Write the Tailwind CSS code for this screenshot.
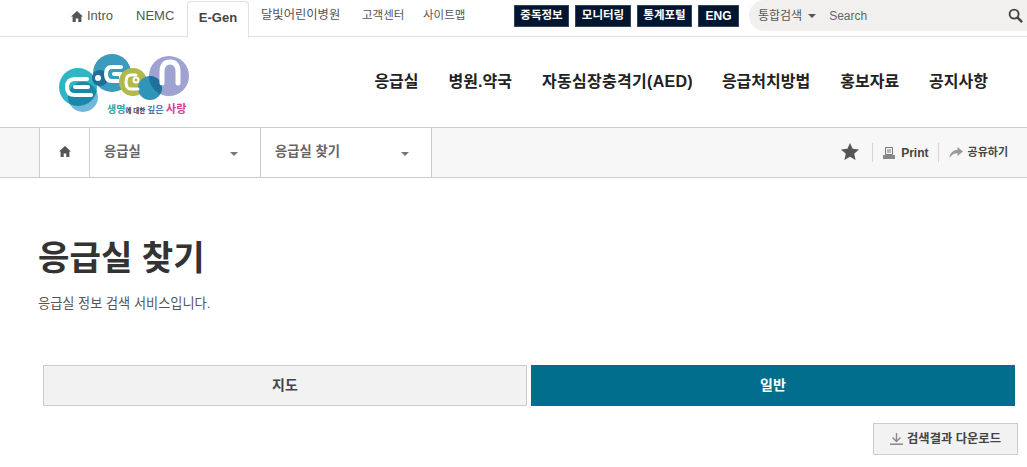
<!DOCTYPE html>
<html lang="ko">
<head>
    <meta charset="UTF-8">
    <meta name="viewport" content="width=device-width, initial-scale=1.0">
    <title>응급실 찾기 - E-Gen</title>
    <script src="https://cdn.jsdelivr.net/npm/@tailwindcss/browser@4"></script>
</head>
<body class="bg-white overflow-hidden h-[467px] font-['Liberation_Sans','Noto_Sans_CJK_KR',sans-serif] text-[#333]">
    <!-- Top utility bar -->
    <div class="h-[37px] border-b border-[#e2e2e2] flex items-start">
        <nav class="w-[514px] shrink-0 flex items-start pl-[71px] text-[13px] text-[#555] h-[37px] leading-[31px] whitespace-nowrap">
            <a class="w-[65px] flex items-center h-[31px]">
                <svg class="w-[12px] h-[11px] mr-[4px] mt-[1px]" viewBox="0 0 12 11"><path fill="#555" d="M6 0 L12 5.6 L10.4 5.6 L10.4 11 L7.3 11 L7.3 7.4 L4.7 7.4 L4.7 11 L1.6 11 L1.6 5.6 L0 5.6 Z"/></svg>
                Intro
            </a>
            <a class="w-[51px]">NEMC</a>
            <a class="w-[60px] h-[36px] mt-[1px] box-content bg-white border border-b-0 border-[#e2e2e2] rounded-t-[4px] text-center font-bold text-[#444] relative leading-[31px]">E-Gen</a>
            <a class="ml-[12px] w-[101px] text-[12.3px]">달빛어린이병원</a>
            <a class="w-[61px] text-[11.5px]">고객센터</a>
            <a class="text-[11.5px]">사이트맵</a>
        </nav>
        <div class="flex gap-[6px] mt-[5px] text-[11.5px] font-bold text-white">
            <a class="w-[55px] h-[22px] bg-[#03152f] border border-[#2d4663] flex items-center justify-center">중독정보</a>
            <a class="w-[56px] h-[22px] bg-[#03152f] border border-[#2d4663] flex items-center justify-center">모니터링</a>
            <a class="w-[55px] h-[22px] bg-[#03152f] border border-[#2d4663] flex items-center justify-center">통계포털</a>
            <a class="w-[41px] h-[22px] bg-[#03152f] border border-[#2d4663] flex items-center justify-center text-[12px]">ENG</a>
        </div>
        <div class="ml-[10px] w-[278px] h-[31px] bg-[#f1f0ee] rounded-l-full flex items-center text-[12px] text-[#666]">
            <span class="ml-[9px] text-[12px] text-[#555]">통합검색</span>
            <span class="ml-[6px] w-0 h-0 border-x-[4px] border-x-transparent border-t-[4px] border-t-[#555]"></span>
            <span class="ml-[13px] flex-1">Search</span>
            <svg class="w-[15px] h-[15px] mr-[4px]" viewBox="0 0 16 16" fill="none" stroke="#444"><circle cx="6.5" cy="6.5" r="4.8" stroke-width="2"/><path d="M10 10 L15 15" stroke-width="2.6"/></svg>
        </div>
    </div>

    <!-- Main header -->
    <header class="h-[90px] flex items-center justify-between pl-[58px] pr-[39px]">
        <div class="w-[132px] h-[66px] relative -mt-[2px]">
            <svg class="w-[132px] h-[66px]" viewBox="0 0 132 66" fill="none">
                <defs>
                    <clipPath id="eClip"><circle cx="20" cy="39" r="19"/></clipPath>
                    <clipPath id="nClip"><circle cx="111" cy="28" r="20"/></clipPath>
                </defs>
                <!-- E -->
                <circle cx="25" cy="49" r="15" fill="#6fb8dc"/>
                <circle cx="20" cy="39" r="19" fill="#2fb5c3"/>
                <circle cx="25" cy="49" r="15" fill="#1e86a8" clip-path="url(#eClip)"/>
                <path d="M29 31 H17 Q9 31 9 39 Q9 47 17 47 H33" stroke="#fff" stroke-width="4" stroke-linecap="round"/>
                <path d="M17 39 H30" stroke="#fff" stroke-width="4" stroke-linecap="round"/>
                <!-- G -->
                <circle cx="54" cy="25" r="19" fill="#3a9bbd"/>
                <circle cx="42" cy="30" r="8" fill="#1d6f97"/>
                <circle cx="40" cy="30" r="3" fill="#fff"/>
                <path d="M63 19 H54 Q48 19 48 26 Q48 33 54 33 H63 V26 H56" stroke="#fff" stroke-width="4" stroke-linecap="round" stroke-linejoin="round"/>
                <!-- e + n -->
                <circle cx="111" cy="28" r="20" fill="#9fa3d2"/>
                <circle cx="75" cy="34" r="14" fill="#b2b84a"/>
                <circle cx="92" cy="40" r="12" fill="#2f94b8"/>
                <circle cx="92" cy="40" r="12" fill="#1f6f9f" clip-path="url(#nClip)"/>
                <path d="M80 41 H73 Q68 41 68 34 Q68 27 73 27 H78" stroke="#fff" stroke-width="3" stroke-linecap="round"/>
                <circle cx="78" cy="32" r="2.5" stroke="#fff" stroke-width="2"/>
                <path d="M104 35 V24 Q104 14 112 14 Q120 14 120 24 V35" stroke="#fff" stroke-width="5" stroke-linecap="round"/>
            </svg>
            <div class="absolute left-[49px] top-[53px] whitespace-nowrap font-bold leading-[14px] text-[#333]">
                <span class="text-[#2aa5a5] text-[10px]">생명</span><span class="text-[6.5px]">에 대한 </span><span class="text-[#4a7ab0] text-[9px]">깊은 </span><span class="text-[#d6408c] text-[11px]">사랑</span>
            </div>
        </div>
        <nav class="flex gap-[30px] text-[16px] font-bold text-[#222]">
            <a>응급실</a>
            <a>병원.약국</a>
            <a class="w-[150px] whitespace-nowrap tracking-[0.3px]">자동심장충격기(AED)</a>
            <a>응급처치방법</a>
            <a>홍보자료</a>
            <a>공지사항</a>
        </nav>
    </header>

    <!-- Breadcrumb bar -->
    <div class="h-[51px] bg-[#f7f7f7] border-y border-[#ccc] flex items-stretch pl-[39px] pr-[19px]">
        <div class="flex bg-white border-x border-[#ccc]">
            <a class="w-[49px] flex items-center justify-center pb-[2px]">
                <svg class="w-[12px] h-[11px]" viewBox="0 0 12 11"><path fill="#555" d="M6 0 L12 5.6 L10.4 5.6 L10.4 11 L7.3 11 L7.3 7.4 L4.7 7.4 L4.7 11 L1.6 11 L1.6 5.6 L0 5.6 Z"/></svg>
            </a>
            <a class="w-[171px] border-l border-[#ccc] flex items-center justify-between pl-[14px] pr-[22px] pb-[2px] text-[13.3px] font-bold text-[#666]">
                응급실
                <span class="w-0 h-0 border-x-[4.5px] border-x-transparent border-t-[4px] border-t-[#777] mt-[5px]"></span>
            </a>
            <a class="w-[171px] border-l border-[#ccc] flex items-center justify-between pl-[14px] pr-[22px] pb-[2px] text-[13.3px] font-bold text-[#666]">
                응급실 찾기
                <span class="w-0 h-0 border-x-[4.5px] border-x-transparent border-t-[4px] border-t-[#777] mt-[5px]"></span>
            </a>
        </div>
        <div class="ml-auto flex items-center text-[11px] font-bold text-[#444]">
            <svg class="w-[18px] h-[17px] mr-[13px] -mt-[2px]" viewBox="0 0 18 17"><path fill="#555" d="M9 0 L11.6 5.8 L18 6.5 L13.2 10.7 L14.6 17 L9 13.8 L3.4 17 L4.8 10.7 L0 6.5 L6.4 5.8 Z"/></svg>
            <span class="w-px h-[19px] bg-[#d5d5d5]"></span>
            <svg class="w-[12px] h-[12px] ml-[10px] mr-[6px]" viewBox="0 0 12 12"><path fill="none" stroke="#777" d="M2.5 .5 H9.5 V7.5 H2.5 Z"/><path stroke="#777" d="M4 3 H8 M4 5 H8"/><path fill="#888" d="M0 8 H12 V12 H0 Z"/></svg>
            <span class="text-[12px]">Print</span>
            <span class="w-px h-[19px] bg-[#d5d5d5] ml-[9px]"></span>
            <svg class="w-[14px] h-[11px] ml-[10px] mr-[5px]" viewBox="0 0 14 11"><path fill="#999" d="M8.5 0 L14 4.5 L8.5 9 V6.2 Q3.5 6 0.5 11 Q1 3.5 8.5 2.8 Z"/></svg>
            <span>공유하기</span>
        </div>
    </div>

    <!-- Content -->
    <main class="px-[38px]">
        <h1 class="mt-[59px] text-[34.2px] font-bold leading-[42px] text-[#333]">응급실 찾기</h1>
        <p class="mt-[16px] text-[13.2px] leading-[18px] text-[#555]">응급실 정보 검색 서비스입니다.</p>
        <div class="mt-[52px] ml-[5px] flex gap-[4px] w-[972px]">
            <a class="w-[484px] h-[41px] bg-[#f2f2f2] border border-[#ccc] flex items-center justify-center text-[14px] font-bold text-[#444]">지도</a>
            <a class="w-[484px] h-[41px] bg-[#006e8c] flex items-center justify-center text-[14px] font-bold text-white">일반</a>
        </div>
        <div class="mt-[17px] flex justify-end mr-[-29px]">
            <a class="w-[145px] h-[32px] bg-[#f2f2f2] border border-[#ccc] flex items-center justify-center text-[12.3px] font-bold text-[#444]">
                <svg class="w-[13px] h-[12px] mr-[4px]" viewBox="0 0 13 12" fill="none" stroke="#888"><path d="M6.5 0 V8 M2.5 4.5 L6.5 8.5 L10.5 4.5" stroke-width="1.4"/><path d="M0 11.2 H13" stroke-width="1.5"/></svg>
                검색결과 다운로드
            </a>
        </div>
    </main>
</body>
</html>
